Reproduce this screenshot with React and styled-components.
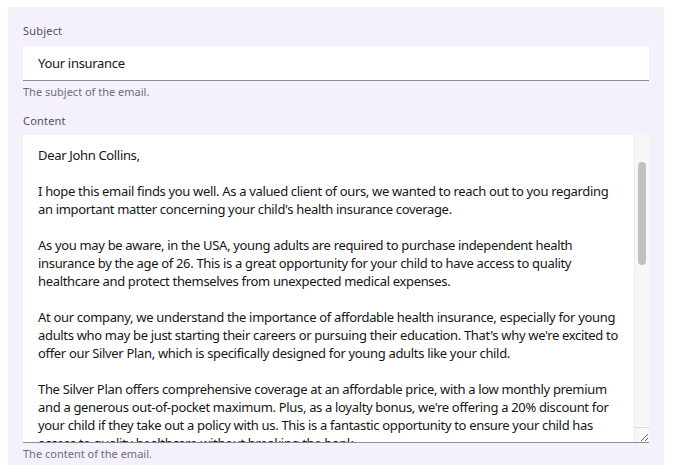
import React from "react";
import styled, { createGlobalStyle } from "styled-components";

const GlobalStyle = createGlobalStyle`
  html, body {
    margin: 0;
    padding: 0;
    background: #ffffff;
  }
  body {
    font-family: "Noto Sans", "Liberation Sans", sans-serif;
    color: #161616;
  }
`;

const Page = styled.div`
  padding: 7px 9px 0 8px;
  height: 465px;
  box-sizing: border-box;
  overflow: hidden;
`;

const Panel = styled.div`
  background: #f4f1fd;
  padding: 16px 15px 0 15px;
  height: 100%;
  box-sizing: border-box;
`;

const FormItem = styled.div`
  display: flex;
  flex-direction: column;
  margin-bottom: ${(p) => p.$gap || 0}px;
`;

const Label = styled.label`
  font-size: 11px;
  line-height: 16px;
  letter-spacing: 0.2px;
  color: #525252;
  margin-bottom: ${(p) => p.$space || 7}px;
`;

const TextInput = styled.input`
  height: 35px;
  box-sizing: border-box;
  border: none;
  border-bottom: 1px solid #8d8d8d;
  background: #ffffff;
  padding: 0 15px;
  font-family: inherit;
  font-size: 13px;
  letter-spacing: -0.3px;
  color: #161616;
  outline: none;
`;

const AreaWrap = styled.div`
  position: relative;
  display: flex;
  flex-direction: column;
`;

const TextArea = styled.textarea`
  height: 308px;
  box-sizing: border-box;
  border: none;
  border-bottom: 1px solid #8d8d8d;
  background: #ffffff;
  padding: 11px 30px 11px 15px;
  font-family: inherit;
  font-size: 13px;
  line-height: 18px;
  letter-spacing: -0.33px;
  color: #161616;
  outline: none;
  resize: none;
  overflow: hidden;
`;

/* drawn scrollbar, sits over the textarea's right edge */
const ScrollTrack = styled.div`
  position: absolute;
  top: 0;
  right: 0;
  width: 15px;
  bottom: 16px;
  box-sizing: border-box;
  background: #f8f8f8;
  border-left: 1px solid #ececec;
  pointer-events: none;
`;

const ScrollThumb = styled.div`
  position: absolute;
  left: 3px;
  width: 8px;
  border-radius: 4px;
  background: #c1c1c1;
`;

const Corner = styled.div`
  position: absolute;
  right: 0;
  bottom: 1px;
  width: 15px;
  height: 15px;
  box-sizing: border-box;
  background: #f8f8f8;
  border-left: 1px solid #ececec;
  border-top: 1px solid #dcdcdc;
  pointer-events: none;

  svg {
    display: block;
  }
`;

const Helper = styled.div`
  font-size: 11px;
  line-height: 16px;
  letter-spacing: 0;
  color: #6f6f6f;
  margin-top: 3px;
`;

const emailBody = `Dear John Collins,

I hope this email finds you well. As a valued client of ours, we wanted to reach out to you regarding an important matter concerning your child's health insurance coverage.

As you may be aware, in the USA, young adults are required to purchase independent health insurance by the age of 26. This is a great opportunity for your child to have access to quality healthcare and protect themselves from unexpected medical expenses.

At our company, we understand the importance of affordable health insurance, especially for young adults who may be just starting their careers or pursuing their education. That's why we're excited to offer our Silver Plan, which is specifically designed for young adults like your child.

The Silver Plan offers comprehensive coverage at an affordable price, with a low monthly premium and a generous out-of-pocket maximum. Plus, as a loyalty bonus, we're offering a 20% discount for your child if they take out a policy with us. This is a fantastic opportunity to ensure your child has access to quality healthcare without breaking the bank.

To enroll your child in the Silver Plan, simply visit our website or give us a call. Our friendly customer service team will be happy to walk you through the enrollment process and answer any questions you may have.

Thank you for your continued trust in our company. We look forward to helping your child get the coverage they deserve.

Best regards,
Your insurance team`;

export default function App() {
  return (
    <>
      <GlobalStyle />
      <Page>
        <Panel>
          <FormItem $gap={13}>
            <Label htmlFor="subject">Subject</Label>
            <TextInput id="subject" defaultValue="Your insurance" />
            <Helper>The subject of the email.</Helper>
          </FormItem>
          <FormItem>
            <Label htmlFor="content" $space={6}>
              Content
            </Label>
            <AreaWrap>
              <TextArea id="content" defaultValue={emailBody} />
              <ScrollTrack>
                <ScrollThumb style={{ top: 27, height: 103 }} />
              </ScrollTrack>
              <Corner>
                <svg width="14" height="14" viewBox="0 0 14 14">
                  <path d="M13 6 L6 13 M13 10 L10 13" stroke="#6a6a6a" strokeWidth="1" />
                </svg>
              </Corner>
            </AreaWrap>
            <Helper>The content of the email.</Helper>
          </FormItem>
        </Panel>
      </Page>
    </>
  );
}
